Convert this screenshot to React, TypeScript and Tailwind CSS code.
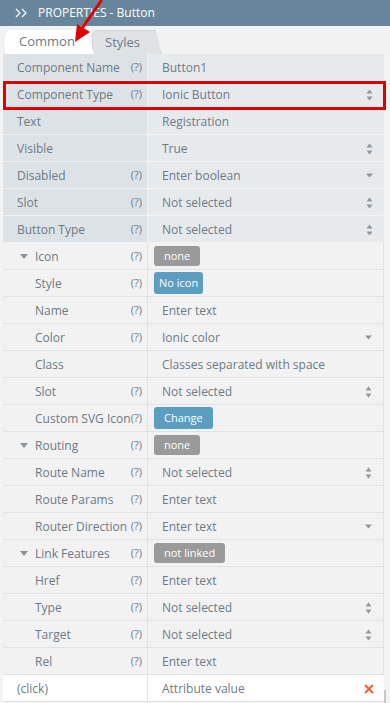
import React from "react";

type Row = {
  label: string;
  q?: boolean;
  value?: string;
  kind?: "text" | "updown" | "down" | "badge-gray" | "badge-blue" | "x";
  level?: 0 | 1 | 2;
  tone?: "top" | "low" | "white";
  pad?: string;
};

const rows: Row[] = [
  { label: "Component Name", q: true, value: "Button1", tone: "top", level: 0 },
  { label: "Component Type", q: true, value: "Ionic Button", kind: "updown", tone: "top", level: 0 },
  { label: "Text", value: "Registration", tone: "top", level: 0 },
  { label: "Visible", value: "True", kind: "updown", tone: "top", level: 0 },
  { label: "Disabled", q: true, value: "Enter boolean", kind: "down", tone: "top", level: 0 },
  { label: "Slot", q: true, value: "Not selected", kind: "updown", tone: "top", level: 0 },
  { label: "Button Type", q: true, value: "Not selected", kind: "updown", tone: "top", level: 0 },
  { label: "Icon", q: true, value: "none", kind: "badge-gray", tone: "low", level: 1, pad: "px-[10px]" },
  { label: "Style", q: true, value: "No icon", kind: "badge-blue", tone: "low", level: 2, pad: "px-[5px]" },
  { label: "Name", q: true, value: "Enter text", tone: "low", level: 2 },
  { label: "Color", q: true, value: "Ionic color", kind: "down", tone: "low", level: 2 },
  { label: "Class", value: "Classes separated with space", tone: "low", level: 2 },
  { label: "Slot", q: true, value: "Not selected", kind: "updown", tone: "low", level: 2 },
  { label: "Custom SVG Icon", q: true, value: "Change", kind: "badge-blue", tone: "low", level: 2, pad: "px-[10px]" },
  { label: "Routing", q: true, value: "none", kind: "badge-gray", tone: "low", level: 1, pad: "px-[10px]" },
  { label: "Route Name", q: true, value: "Not selected", kind: "updown", tone: "low", level: 2 },
  { label: "Route Params", q: true, value: "Enter text", tone: "low", level: 2 },
  { label: "Router Direction", q: true, value: "Enter text", kind: "down", tone: "low", level: 2 },
  { label: "Link Features", q: true, value: "not linked", kind: "badge-gray", tone: "low", level: 1, pad: "px-[10px]" },
  { label: "Href", q: true, value: "Enter text", tone: "low", level: 2 },
  { label: "Type", q: true, value: "Not selected", kind: "updown", tone: "low", level: 2 },
  { label: "Target", q: true, value: "Not selected", kind: "updown", tone: "low", level: 2 },
  { label: "Rel", q: true, value: "Enter text", tone: "low", level: 2 },
  { label: "(click)", value: "Attribute value", kind: "x", tone: "white", level: 0 },
];

function UpDown() {
  return (
    <svg width="7" height="12" viewBox="0 0 7 12" className="shrink-0">
      <path d="M3.5 0.5 L6.5 4.5 L0.5 4.5 Z" fill="#8f979e" />
      <path d="M0.5 7.5 L6.5 7.5 L3.5 11.5 Z" fill="#8f979e" />
    </svg>
  );
}

function Down() {
  return (
    <svg width="7" height="5" viewBox="0 0 7 5" className="shrink-0">
      <path d="M0 0.5 L7 0.5 L3.5 4.5 Z" fill="#8f979e" />
    </svg>
  );
}

function RowView({ r }: { r: Row }) {
  const labelBg =
    r.tone === "top" ? "bg-[#dde2e6]" : r.tone === "white" ? "bg-white" : "bg-[#f2f2f2]";
  const valueBg =
    r.tone === "top" ? "bg-[#e6eaed]" : r.tone === "white" ? "bg-white" : "bg-[#f2f2f2]";
  const borderB = r.tone === "top" ? "border-[#f1f3f5]" : "border-[#dde3e8]";
  const isBadge = r.kind === "badge-gray" || r.kind === "badge-blue";
  return (
    <div className={`flex h-[27px] border-b ${borderB}`}>
      <div
        className={`w-[144px] shrink-0 flex items-center justify-between pr-[5px] pt-[1px] ${labelBg} ${
          r.level === 0 ? "pl-[14px]" : "pl-[32px]"
        } relative`}
      >
        {r.level === 1 && (
          <svg width="8" height="5" viewBox="0 0 8 5" className="absolute left-[17px] top-[11px]">
            <path d="M0 0 L8 0 L4 5 Z" fill="#8a949c" />
          </svg>
        )}
        <span className="whitespace-nowrap">{r.label}</span>
        {r.q && <span className="text-[11px] whitespace-nowrap">(?)</span>}
      </div>
      <div className={`w-px shrink-0 ${r.tone === "top" ? "bg-[#f1f3f5]" : "bg-[#dde3e8]"}`} />
      <div
        className={`flex-1 flex items-center justify-between ${valueBg} ${
          isBadge ? "pl-[6px]" : "pl-[14px] pt-[1px]"
        } pr-[11px] ${r.tone === "low" ? "border-r border-[#dde3e8]" : ""}`}
      >
        {isBadge ? (
          <span
            className={`${r.kind === "badge-gray" ? "h-[20px] bg-[#9a9a9a]" : "h-[22px] bg-[#5b9ec2]"} ${
              r.pad
            } rounded-[3px] flex items-center text-white text-[11px]`}
          >
            {r.value}
          </span>
        ) : (
          <span className="whitespace-nowrap">{r.value}</span>
        )}
        {r.kind === "updown" && <UpDown />}
        {r.kind === "down" && <Down />}
        {r.kind === "x" && (
          <svg width="10" height="10" viewBox="0 0 10 10" className="mr-[-1px]">
            <path d="M1 1 L9 9 M9 1 L1 9" stroke="#f3602b" strokeWidth="2" />
          </svg>
        )}
      </div>
    </div>
  );
}

export default function App() {
  return (
    <div
      className="w-[390px] h-[703px] overflow-hidden bg-[#f3f3f3] relative text-[12px] text-[#6d7a86]"
      style={{ fontFamily: "'Open Sans', 'Noto Sans', sans-serif" }}
    >
      <div className="h-[26px] bg-[#67869b] flex items-center pl-[15px] text-white text-[12px]">
        <svg width="14" height="10" viewBox="0 0 14 10" className="mr-[9px]">
          <path d="M1 1 L5 5 L1 9 M7 1 L11 5 L7 9" stroke="#fff" strokeWidth="1.2" fill="none" />
        </svg>
        <span>PROPERTIES - Button</span>
      </div>
      <div className="h-[28px] flex items-end pl-[5px] bg-[#f2f2f2]">
        <div className="h-[24px] w-[89px] bg-white rounded-tl-[7px] rounded-tr-[4px] flex items-center pl-[14px] text-[13px] text-[#6d7a86] relative z-10 [clip-path:polygon(0_0,92%_0,100%_100%,0_100%)]">
          Common
        </div>
        <div className="h-[24px] w-[70px] -ml-[2px] bg-[#dfe3e6] rounded-tl-[6px] rounded-tr-[6px] border border-[#cfd5da] border-b-0 flex items-center pl-[12px] text-[13px] text-[#6d7a86] [clip-path:polygon(0_0,91%_0,100%_100%,0_100%)]">
          Styles
        </div>
      </div>
      <div className="pl-[3px] pr-[6px]">
        {rows.map((r, i) => (
          <RowView key={i} r={r} />
        ))}
      </div>
      <div className="absolute left-[3px] top-[81px] w-[383px] h-[29px] border-[3px] border-[#e00000] pointer-events-none z-20" />
      <svg
        className="absolute left-0 top-0 pointer-events-none z-30"
        width="120"
        height="60"
        viewBox="0 0 120 60"
      >
        <path d="M101 1 L83 27" stroke="#e00000" strokeWidth="3" strokeLinecap="round" />
        <path d="M75 42 L77 24 L90 32 Z" fill="#e00000" />
      </svg>
      <div className="absolute right-[4px] bottom-0 w-[2px] h-[13px] bg-[#c8c8c8]" />
    </div>
  );
}
